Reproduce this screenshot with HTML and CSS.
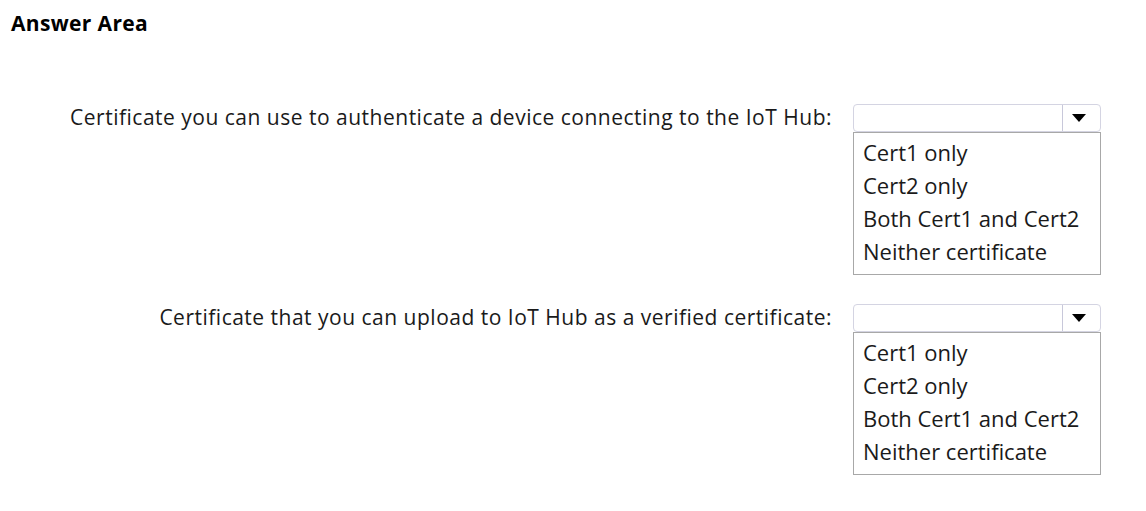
FILE: index.html
```html
<!DOCTYPE html>
<html lang="en">
<head>
<meta charset="utf-8">
<title>Answer Area</title>
<link rel="stylesheet" href="styles.css">
</head>
<body>
<h1 class="title">Answer Area</h1>
<div class="qa">
  <div class="label">Certificate you can use to authenticate a device connecting to the IoT Hub:</div>
  <div class="select">
    <div class="select-box">
      <span class="select-value"></span>
      <span class="select-btn"><svg width="14" height="8" viewBox="0 0 14 8"><path d="M0 0H14L7 8Z" fill="#000"/></svg></span>
    </div>
    <ul class="options">
      <li>Cert1 only</li>
      <li>Cert2 only</li>
      <li>Both Cert1 and Cert2</li>
      <li>Neither certificate</li>
    </ul>
  </div>
  <div class="label">Certificate that you can upload to IoT Hub as a verified certificate:</div>
  <div class="select">
    <div class="select-box">
      <span class="select-value"></span>
      <span class="select-btn"><svg width="14" height="8" viewBox="0 0 14 8"><path d="M0 0H14L7 8Z" fill="#000"/></svg></span>
    </div>
    <ul class="options">
      <li>Cert1 only</li>
      <li>Cert2 only</li>
      <li>Both Cert1 and Cert2</li>
      <li>Neither certificate</li>
    </ul>
  </div>
</div>
</body>
</html>
```
FILE: styles.css
```css
html, body {
  margin: 0;
  padding: 0;
  background: #fff;
}
body {
  font-family: "Open Sans", "Noto Sans", sans-serif;
  color: #1a1a1a;
  padding: 9px 0 0 11px;
}
.title {
  margin: 0;
  font-size: 21px;
  font-weight: 700;
  line-height: 28px;
  letter-spacing: 0.35px;
  color: #000;
}
.qa {
  display: grid;
  grid-template-columns: 821px 248px;
  column-gap: 21px;
  row-gap: 29px;
  margin-top: 67px;
}
.label {
  text-align: right;
  font-size: 21px;
  line-height: 27px;
  letter-spacing: 0.5px;
  white-space: nowrap;
}
.select {
  display: flex;
  flex-direction: column;
}
.select-box {
  display: flex;
  height: 28px;
  box-sizing: border-box;
  border: 1px solid #d4d4e2;
  border-radius: 4px;
}
.select-value {
  flex: 1;
}
.select-btn {
  width: 38px;
  border-left: 1px solid #c8c8da;
  display: flex;
  align-items: center;
  justify-content: center;
  padding-right: 5px;
  box-sizing: border-box;
}
.options {
  list-style: none;
  margin: 0;
  padding: 3px 0 6px 9px;
  border: 1px solid #a8a8a8;
  font-size: 22px;
  line-height: 33px;
  height: 143px;
  box-sizing: border-box;
}
```
